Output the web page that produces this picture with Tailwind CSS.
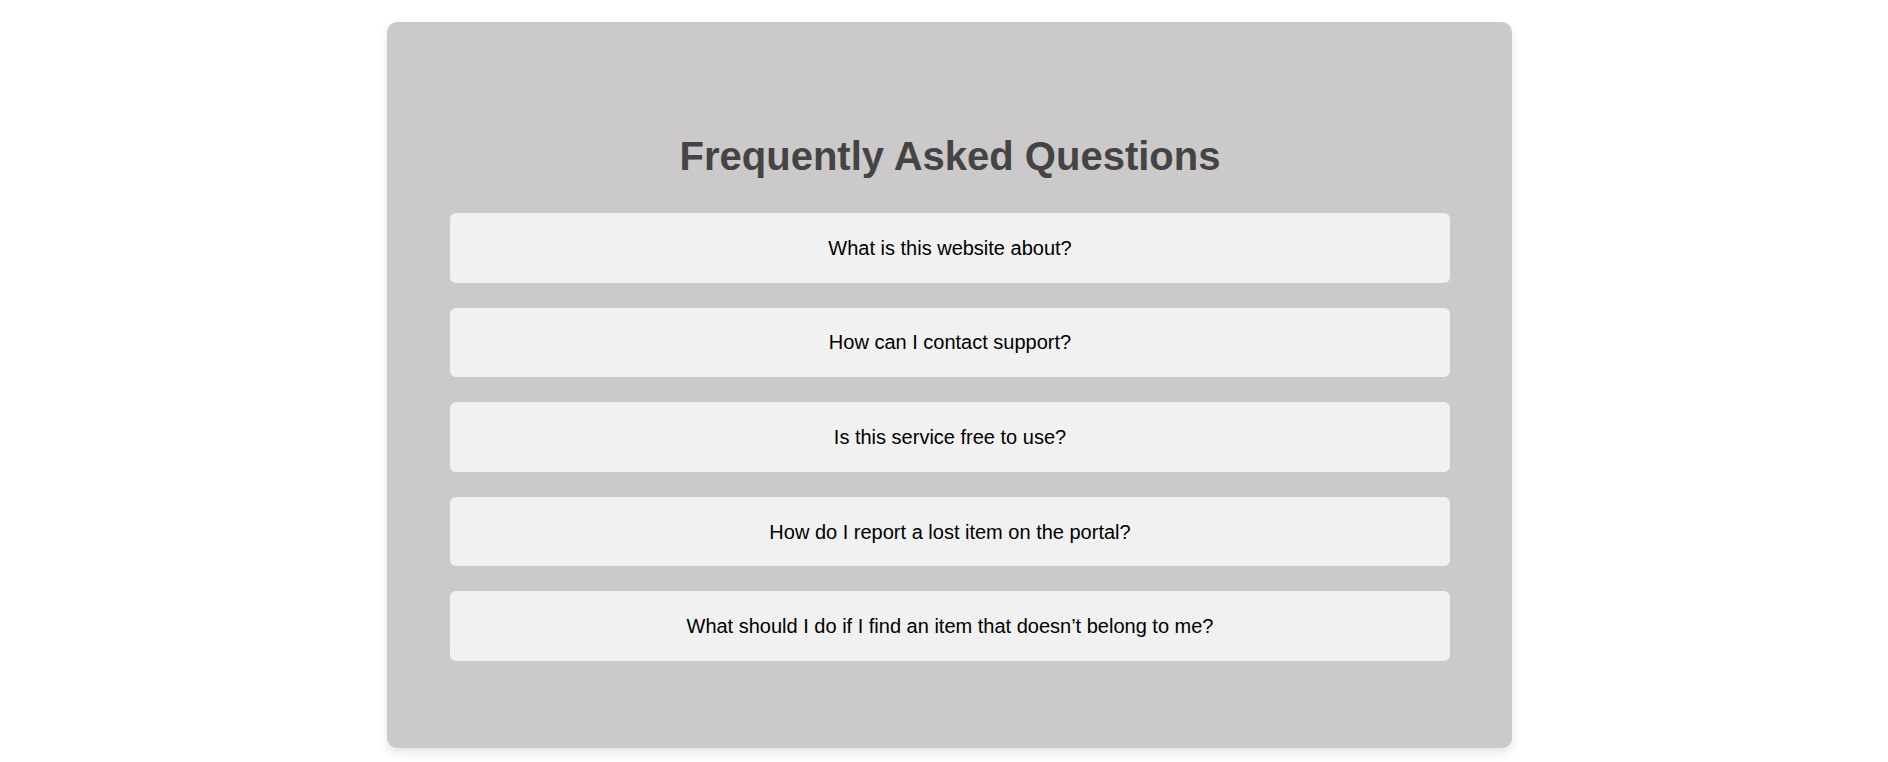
<!DOCTYPE html>
<html lang="en">
<head>
<meta charset="utf-8">
<title>Frequently Asked Questions</title>
<script src="https://cdn.jsdelivr.net/npm/@tailwindcss/browser@4"></script>
</head>
<body class="min-h-screen bg-white pt-[22px] pr-3 pb-[14px] pl-[23px] font-['Liberation_Sans',Arial,sans-serif]">
<main class="mx-auto max-w-[1125px] rounded-[10px] bg-[#cbc9c9] pt-[108px] pr-[62px] pb-[87px] pl-[63px] shadow-[0_5px_10px_rgba(0,0,0,0.1)]">
<h1 class="text-center text-[40px] leading-[52px] font-bold text-[#444]">Frequently Asked Questions</h1>
<div class="mt-[31px] flex min-h-112 flex-col gap-[25px] text-xl leading-6 text-black">
<button type="button" class="w-full grow rounded-md bg-[#f1f1f1] px-6 py-5">What is this website about?</button>
<button type="button" class="w-full grow rounded-md bg-[#f1f1f1] px-6 py-5">How can I contact support?</button>
<button type="button" class="w-full grow rounded-md bg-[#f1f1f1] px-6 py-5">Is this service free to use?</button>
<button type="button" class="w-full grow rounded-md bg-[#f1f1f1] px-6 py-5">How do I report a lost item on the portal?</button>
<button type="button" class="w-full grow rounded-md bg-[#f1f1f1] px-6 py-5">What should I do if I find an item that doesn’t belong to me?</button>
</div>
</main>
</body>
</html>
